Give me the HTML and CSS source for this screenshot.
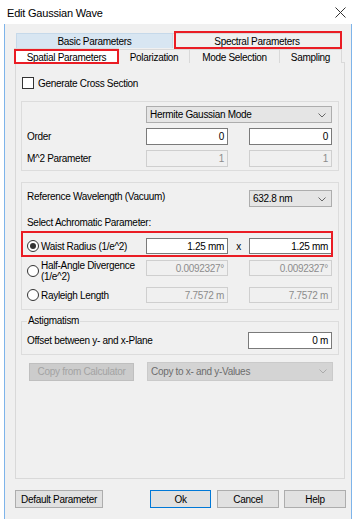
FILE: index.html
```html
<!DOCTYPE html>
<html>
<head>
<meta charset="utf-8">
<link rel="stylesheet" href="styles.css">
</head>
<body>
<div class="window">
  <div class="titlebar">
    <span class="title">Edit Gaussian Wave</span>
    <svg class="close" width="11" height="11" viewBox="0 0 11 11"><path d="M0.5 0.5 L10.5 10.5 M10.5 0.5 L0.5 10.5" stroke="#333" stroke-width="1" fill="none"/></svg>
  </div>
  <div class="client">
    <div class="tabs">
      <div class="tabrow row1">
        <div class="tab basic">Basic Parameters</div>
        <div class="tab spectral">Spectral Parameters<span class="mark mark-spectral"></span></div>
      </div>
      <div class="tabrow row2">
        <div class="tab sel">Spatial Parameters<span class="mark mark-spatial"></span></div>
        <div class="tab pol">Polarization</div>
        <div class="tab mode">Mode Selection</div>
        <div class="tab samp">Sampling</div>
      </div>
    </div>
    <div class="panel">
      <div class="check-row">
        <span class="checkbox"></span>
        <span>Generate Cross Section</span>
      </div>

      <div class="group g1">
        <div class="row">
          <span></span>
          <div class="combo span3">Hermite Gaussian Mode<svg class="chev" width="8" height="5" viewBox="0 0 8 5"><path d="M0.5 0.5 L4 4 L7.5 0.5" stroke="#666" fill="none"/></svg></div>
        </div>
        <div class="row r-order">
          <span class="lbl">Order</span>
          <div class="input">0</div>
          <span></span>
          <div class="input">0</div>
        </div>
        <div class="row r-m2">
          <span class="lbl">M^2 Parameter</span>
          <div class="input dis">1</div>
          <span></span>
          <div class="input dis">1</div>
        </div>
      </div>

      <div class="group g2">
        <div class="row r-wl">
          <span class="lbl top wl-lbl">Reference Wavelength (Vacuum)</span>
          <div class="combo wl-combo">632.8 nm<svg class="chev" width="8" height="5" viewBox="0 0 8 5"><path d="M0.5 0.5 L4 4 L7.5 0.5" stroke="#666" fill="none"/></svg></div>
        </div>
        <div class="sel-label">Select Achromatic Parameter:</div>
        <div class="row r-waist">
          <span class="lbl radio-lbl"><span class="radio on"></span>Waist Radius (1/e^2)</span>
          <div class="input">1.25 mm</div>
          <span class="times">x</span>
          <div class="input">1.25 mm</div>
          <span class="mark mark-waist"></span>
        </div>
        <div class="row r-half">
          <span class="lbl radio-lbl"><span class="radio"></span><span class="two">Half-Angle Divergence<br>(1/e^2)</span></span>
          <div class="input dis">0.0092327°</div>
          <span></span>
          <div class="input dis">0.0092327°</div>
        </div>
        <div class="row r-ray">
          <span class="lbl radio-lbl"><span class="radio"></span>Rayleigh Length</span>
          <div class="input dis">7.7572 m</div>
          <span></span>
          <div class="input dis">7.7572 m</div>
        </div>
      </div>

      <fieldset class="group g3">
        <legend>Astigmatism</legend>
        <div class="row r-off">
          <span class="lbl wide">Offset between y- and x-Plane</span>
          <div class="input">0 m</div>
        </div>
      </fieldset>

      <div class="row r-copy">
        <div class="btn-dis">Copy from Calculator</div>
        <div class="combo dis">Copy to x- and y-Values<svg class="chev" width="8" height="5" viewBox="0 0 8 5"><path d="M0.5 0.5 L4 4 L7.5 0.5" stroke="#aaa" fill="none"/></svg></div>
      </div>
    </div>

    <div class="buttons">
      <div class="btn b-default">Default Parameter</div>
      <div class="btn b-ok">Ok</div>
      <div class="btn b-cancel">Cancel</div>
      <div class="btn b-help">Help</div>
    </div>
  </div>
</div>
</body>
</html>
```

FILE: styles.css
```css
* { box-sizing: border-box; }
html, body { margin: 0; padding: 0; background: #ffffff; }
body {
  width: 356px;
  height: 519px;
  overflow: hidden;
  font-family: "Liberation Sans", Arial, sans-serif;
  font-size: 10px;
  letter-spacing: -0.3px;
  color: #000;
}
.window { width: 356px; }
.titlebar {
  height: 24px;
  background: #fff;
  display: flex;
  align-items: center;
  justify-content: space-between;
  padding: 0 10px 0 7px;
}
.title { font-size: 11px; letter-spacing: -0.2px; color: #000; padding-top: 1px; }
.close { margin-top: 1px; }
.client {
  margin-left: 4px;
  width: 348px;
  height: 495px;
  background: #f0f0f0;
  border-left: 1px solid #7eb4ea;
  border-right: 1px solid #7eb4ea;
  padding-top: 9px;
}
.tabs { position: relative; z-index: 1; }
.tabrow { display: flex; height: 15px; }
.row1 { margin-left: 11px; }
.row2 { margin-left: 9px; }
.tab {
  position: relative;
  display: flex;
  align-items: center;
  justify-content: center;
  border: 1px solid #d9d9d9;
  border-bottom: none;
  background: #f0f0f0;
  height: 15px;
  padding-top: 1px;
}
.tab + .tab { border-left: none; }
.basic { width: 157px; background: #d8e6f2; border-color: #c6d9ea; }
.spectral { width: 169px; }
.row2 .tab { margin-top: 1px; height: 14px; }
.sel { width: 105px; background: #fff; height: 16px !important; margin-top: 0 !important; z-index: 2; }
.pol { width: 71px; }
.mode { width: 90px; }
.samp { width: 62px; }
.mark { position: absolute; border: 2px solid #ea1c24; pointer-events: none; }
.mark-spectral { left: 1px; right: -1px; top: -3px; bottom: -1px; }
.mark-spatial { left: -1px; right: -1px; top: 0; bottom: 0; }
.mark-waist { left: -1px; right: -1px; top: -7px; bottom: -3px; grid-column: 1 / -1; }

.panel {
  margin-left: 10px;
  margin-top: -1px;
  width: 330px;
  height: 417px;
  border: 1px solid #d9d9d9;
  background: #f0f0f0;
}
.check-row {
  display: flex;
  align-items: center;
  gap: 4px;
  margin-top: 14px;
  padding-left: 6px;
  height: 12px;
}
.checkbox {
  width: 12px; height: 12px;
  border: 1px solid #333;
  background: #fff;
}
.group {
  border: 1px solid #dcdcdc;
  margin: 0 5px 0 5px;
}
.row {
  position: relative;
  display: grid;
  grid-template-columns: 124px 82px 21px 83px;
  align-items: center;
}
.lbl { padding-left: 5px; }
.lbl.top { align-self: start; padding-top: 1px; }
.wl-lbl { grid-column: 1 / 4; }
.wl-combo { grid-column: 4; }
.span3 { grid-column: 2 / 5; }
.g1 { margin-top: 12px; padding: 4px 0 3px; display: flex; flex-direction: column; gap: 5px; }
.combo {
  position: relative;
  height: 17px;
  background: #e5e5e5;
  border: 1px solid #adadad;
  padding-left: 3px;
  display: flex;
  align-items: center;
}
.chev { position: absolute; right: 5px; top: 6px; }
.input {
  height: 17px;
  background: #fff;
  border: 1px solid #7a7a7a;
  text-align: right;
  padding-right: 3px;
  display: flex;
  align-items: center;
  justify-content: flex-end;
}
.input.dis { background: #f0f0f0; border-color: #cfcfcf; color: #8c8c8c; }

.g2 { margin-top: 11px; padding: 7px 0 6px; }
.sel-label { padding-left: 5px; margin-top: 9px; height: 13px; line-height: 13px; }
.r-waist { margin-top: 9px; }
.r-waist .input { height: 16px; }
.times { text-align: center; }
.radio-lbl { display: flex; align-items: center; gap: 2px; }
.radio {
  flex: none;
  width: 12px; height: 12px;
  border: 1px solid #333;
  border-radius: 50%;
  background: #fff;
  position: relative;
}
.radio.on::after {
  content: "";
  position: absolute;
  left: 2px; top: 2px;
  width: 6px; height: 6px;
  border-radius: 50%;
  background: #333;
}
.r-half { margin-top: 6px; align-items: start; }
.two { line-height: 11px; display: block; }
.r-half .input { height: 16px; }
.r-ray { margin-top: 5px; }
.r-ray .input { height: 16px; }

.g3 {
  margin-top: 5px;
  padding: 5px 0 5px;
  min-width: 0;
}
.g3 legend { padding: 0 1px; margin-left: 5px; line-height: 12px; }
.r-off { grid-template-columns: 226px 84px; }

.r-copy { margin-top: 7px; padding-left: 13px; grid-template-columns: 118px 186px; }
.btn-dis {
  width: 105px;
  height: 18px;
  background: #cccccc;
  border: 1px solid #bfbfbf;
  color: #a3a3a3;
  display: flex; align-items: center; justify-content: center;
}
.r-copy .combo { height: 19px; }
.combo.dis { background: #d4d4d4; border-color: #cacaca; color: #6d6d6d; }

.buttons { display: flex; margin-top: 11px; padding-left: 10px; }
.btn {
  height: 18px;
  background: #e1e1e1;
  border: 1px solid #adadad;
  display: flex; align-items: center; justify-content: center;
}
.b-default { width: 88px; }
.b-ok { width: 61px; margin-left: 47px; border-color: #0078d7; }
.b-cancel { width: 62px; margin-left: 6px; }
.b-help { width: 62px; margin-left: 5px; }
```
